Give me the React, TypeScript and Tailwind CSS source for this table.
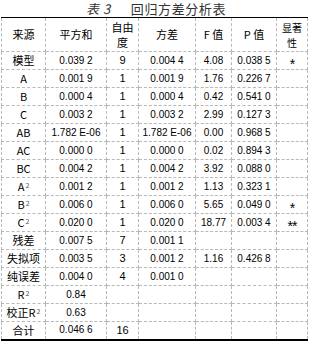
const rows: { src: React.ReactNode; ss: string; df: string; ms: string; f: string; p: string; sig: string }[] = [
  { src: "模型", ss: "0.039 2", df: "9", ms: "0.004 4", f: "4.08", p: "0.038 5", sig: "*" },
  { src: "A", ss: "0.001 9", df: "1", ms: "0.001 9", f: "1.76", p: "0.226 7", sig: "" },
  { src: "B", ss: "0.000 4", df: "1", ms: "0.000 4", f: "0.42", p: "0.541 0", sig: "" },
  { src: "C", ss: "0.003 2", df: "1", ms: "0.003 2", f: "2.99", p: "0.127 3", sig: "" },
  { src: "AB", ss: "1.782 E-06", df: "1", ms: "1.782 E-06", f: "0.00", p: "0.968 5", sig: "" },
  { src: "AC", ss: "0.000 0", df: "1", ms: "0.000 0", f: "0.02", p: "0.894 3", sig: "" },
  { src: "BC", ss: "0.004 2", df: "1", ms: "0.004 2", f: "3.92", p: "0.088 0", sig: "" },
  { src: <Sq b="A" />, ss: "0.001 2", df: "1", ms: "0.001 2", f: "1.13", p: "0.323 1", sig: "" },
  { src: <Sq b="B" />, ss: "0.006 0", df: "1", ms: "0.006 0", f: "5.65", p: "0.049 0", sig: "*" },
  { src: <Sq b="C" />, ss: "0.020 0", df: "1", ms: "0.020 0", f: "18.77", p: "0.003 4", sig: "**" },
  { src: "残差", ss: "0.007 5", df: "7", ms: "0.001 1", f: "", p: "", sig: "" },
  { src: "失拟项", ss: "0.003 5", df: "3", ms: "0.001 2", f: "1.16", p: "0.426 8", sig: "" },
  { src: "纯误差", ss: "0.004 0", df: "4", ms: "0.001 0", f: "", p: "", sig: "" },
  { src: <Sq b="R" />, ss: "0.84", df: "", ms: "", f: "", p: "", sig: "" },
  { src: <span>校正<Sq b="R" /></span>, ss: "0.63", df: "", ms: "", f: "", p: "", sig: "" },
  { src: "合计", ss: "0.046 6", df: "16", ms: "", f: "", p: "", sig: "" },
];

function Sq({ b }: { b: string }) {
  return (
    <span>
      {b}
      <sup className="ml-px text-[7px] text-[#555]">2</sup>
    </span>
  );
}

const cell = "border border-dashed border-[#b8b8b8] p-0 text-center align-middle";

export default function App() {
  return (
    <div className="h-[344px] w-[311px] bg-white pl-px text-black [font-family:'Noto_Sans_CJK_SC',sans-serif]">
      <div className="flex h-[17px] items-center justify-center text-[13px] leading-none tracking-[0.6px] text-[#333]">
        <span className="italic">表 3</span>
        <span className="ml-5">回归方差分析表</span>
      </div>
      <table className="w-[306px] table-fixed border-collapse border-t border-b-2 border-t-black border-b-black text-[10px] leading-none">
        <colgroup>
          <col className="w-[44px]" />
          <col className="w-[61px]" />
          <col className="w-[32px]" />
          <col className="w-[57px]" />
          <col className="w-[36px]" />
          <col className="w-[45px]" />
          <col className="w-[31px]" />
        </colgroup>
        <thead>
          <tr className="h-[34px] text-[11px]">
            <th className={`${cell} font-normal`}>来源</th>
            <th className={`${cell} font-normal`}>平方和</th>
            <th className={`${cell} font-normal leading-[15px]`}>自由<br />度</th>
            <th className={`${cell} font-normal`}>方差</th>
            <th className={`${cell} font-normal`}>F 值</th>
            <th className={`${cell} font-normal`}>P 值</th>
            <th className={`${cell} font-normal text-[10px] leading-[15px]`}>显著<br />性</th>
          </tr>
        </thead>
        <tbody className="[font-family:'Liberation_Sans',sans-serif] text-[10px]">
          {rows.map((r, i) => (
            <tr key={i} className="h-[18px]">
              <td className={`${cell} text-[11px] [font-family:'Noto_Sans_CJK_SC',sans-serif]`}>{r.src}</td>
              <td className={`${cell} whitespace-nowrap`}>{r.ss}</td>
              <td className={`${cell} text-[11px]`}>{r.df}</td>
              <td className={`${cell} whitespace-nowrap`}>{r.ms}</td>
              <td className={cell}>{r.f}</td>
              <td className={cell}>{r.p}</td>
              <td className={`${cell} text-[14px] leading-none tracking-[-1px]`}>
                <span className="inline-block translate-y-[3px]">{r.sig}</span>
              </td>
            </tr>
          ))}
        </tbody>
      </table>
    </div>
  );
}
